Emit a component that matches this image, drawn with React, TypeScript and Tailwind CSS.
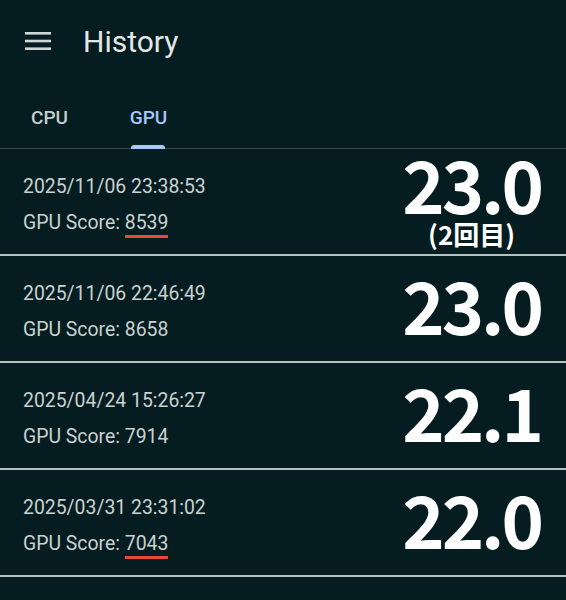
interface HistoryRowProps {
  date: string;
  score: string;
  value: string;
  note?: string;
  marked?: boolean;
}

const HistoryRow = (props: HistoryRowProps) => {
  const { date, score, value, note, marked } = props;
  return (
    <div className="flex h-[107px] items-stretch justify-between border-b-2 border-[#b3c4c1] pr-[25px] pl-[23px]">
      {/* left: date + score */}
      <div className="flex flex-col pt-[20px] font-['Roboto',sans-serif] text-[19.4px] leading-[36px] text-[#c9d2d0]">
        <span>{date}</span>
        <span>
          GPU Score:{' '}
          <span className={marked ? 'border-b-[3px] border-[#e5493b] pb-[1px]' : ''}>{score}</span>
        </span>
      </div>

      {/* right: big value */}
      <div className="flex flex-col items-center justify-center font-['Noto_Sans_CJK_JP',sans-serif] font-bold text-white">
        <span
          className={
            note
              ? 'mt-[-4px] text-[72px] leading-[62px] tracking-[-3px]'
              : 'mb-[10px] text-[72px] leading-[72px] tracking-[-3px]'
          }
        >
          {value}
        </span>
        {note && <span className="mt-[6px] text-[26px] leading-[28px]">{note}</span>}
      </div>
    </div>
  );
};

export default function App() {
  const rows: HistoryRowProps[] = [
    { date: '2025/11/06 23:38:53', score: '8539', value: '23.0', note: '(2回目)', marked: true },
    { date: '2025/11/06 22:46:49', score: '8658', value: '23.0' },
    { date: '2025/04/24 15:26:27', score: '7914', value: '22.1' },
    { date: '2025/03/31 23:31:02', score: '7043', value: '22.0', marked: true },
  ];

  return (
    <div className="h-[600px] w-[566px] overflow-hidden bg-[#051d20] font-['Roboto',sans-serif]">
      {/* top bar */}
      <div className="flex h-[82px] items-center">
        <svg className="ml-[25px] h-[20px] w-[26px]" viewBox="0 0 26 20">
          <rect x="0" y="1" width="26" height="2.6" fill="#cfd8d6" />
          <rect x="0" y="8.7" width="26" height="2.6" fill="#cfd8d6" />
          <rect x="0" y="16.4" width="26" height="2.6" fill="#cfd8d6" />
        </svg>
        <span className="ml-[32px] text-[30px] text-[#e3e8e7]">History</span>
      </div>

      {/* tabs */}
      <div className="flex h-[67px] border-b border-[#3b4848]">
        <div className="flex w-[99px] items-center justify-center pt-[6px] text-[19px] font-medium text-[#c4cecc]">
          CPU
        </div>
        <div className="relative flex w-[99px] items-center justify-center pt-[6px] text-[19px] font-medium text-[#a8c7fa]">
          GPU
          <div className="absolute bottom-[-1px] left-[32px] h-[4px] w-[34px] rounded-t-[3px] bg-[#a8c7fa]" />
        </div>
      </div>

      {rows.map((r, i) => (
        <HistoryRow key={i} {...r} />
      ))}
    </div>
  );
}
